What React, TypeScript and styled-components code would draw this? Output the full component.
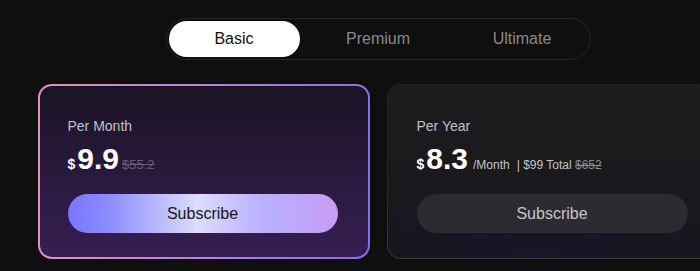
import styled, { createGlobalStyle } from "styled-components";

const GlobalStyle = createGlobalStyle`
  html, body {
    margin: 0;
    padding: 0;
    background: #0f0f0f;
  }

  body {
    font-family: "Liberation Sans", Arial, sans-serif;
    overflow: hidden;
  }
`;

const tabs = ["Basic", "Premium", "Ultimate"];

export default function App() {
  return (
    <>
      <GlobalStyle />
      <Page>
        <TabBar>
          {tabs.map((tab, i) => (
            <Tab key={tab} $active={i === 0}>
              {tab}
            </Tab>
          ))}
        </TabBar>
        <CardRow>
          <Card $featured>
            <Period>Per Month</Period>
            <PriceRow>
              <Currency>$</Currency>
              <Amount>9.9</Amount>
              <OldPrice $featured>$55.2</OldPrice>
            </PriceRow>
            <SubscribeButton $featured>Subscribe</SubscribeButton>
          </Card>
          <Card>
            <Period>Per Year</Period>
            <PriceRow>
              <Currency>$</Currency>
              <Amount>8.3</Amount>
              <Unit>/Month</Unit>
              <Total>
                | $99 Total <Strike>$652</Strike>
              </Total>
            </PriceRow>
            <SubscribeButton>Subscribe</SubscribeButton>
          </Card>
        </CardRow>
      </Page>
    </>
  );
}

const Page = styled.div`
  width: 756px;
  display: flex;
  flex-direction: column;
  align-items: center;
  padding-top: 18px;
  gap: 24px;
`;

const TabBar = styled.div`
  display: flex;
  gap: 13px;
  padding: 2px;
  border: 1px solid #262628;
  border-radius: 999px;
  background: #0f0f0f;
`;

const Tab = styled.div<{ $active?: boolean }>`
  width: 131px;
  height: 36px;
  display: flex;
  align-items: center;
  justify-content: center;
  border-radius: 999px;
  font-size: 16px;
  color: ${(p) => (p.$active ? "#111111" : "#8a8a8c")};
  background: ${(p) => (p.$active ? "#ffffff" : "transparent")};
`;

const CardRow = styled.div`
  display: flex;
  gap: 17px;
`;

const Card = styled.div<{ $featured?: boolean }>`
  width: 332px;
  box-sizing: border-box;
  display: flex;
  flex-direction: column;
  border-radius: 14px;
  border: ${(p) => (p.$featured ? "2px" : "1px")} solid transparent;
  padding: ${(p) => (p.$featured ? "32px 30px 24px 28px" : "33px 30px 25px 29px")};
  background: ${(p) =>
    p.$featured
      ? `linear-gradient(180deg, #1a1424 0%, #2a1a3f 55%, #361e52 100%) padding-box,
         linear-gradient(90deg, #e48ec9 0%, #b57ee0 55%, #8a6cf2 100%) border-box`
      : `radial-gradient(ellipse 60% 50% at 45% 100%, #1a1428 0%, rgba(26, 20, 40, 0) 100%) padding-box,
         linear-gradient(180deg, #1d1d1f 0%, #17161b 100%) padding-box,
         linear-gradient(180deg, #232325 0%, #2a2a2c 60%, #3a3a3c 100%) border-box`};
`;

const Period = styled.div`
  font-size: 14px;
  line-height: 16px;
  color: #c2c0c8;
`;

const PriceRow = styled.div`
  display: flex;
  align-items: baseline;
  margin-top: 8px;
  height: 34px;
  color: #ffffff;
`;

const Currency = styled.span`
  font-size: 14px;
  font-weight: 700;
  margin-right: 2px;
`;

const Amount = styled.span`
  font-size: 30px;
  line-height: 34px;
  font-weight: 700;
`;

const OldPrice = styled.span<{ $featured?: boolean }>`
  margin-left: 3px;
  font-size: 13px;
  color: ${(p) => (p.$featured ? "#6c6078" : "#8a8a8c")};
  text-decoration: line-through;
`;

const Unit = styled.span`
  margin-left: 5px;
  font-size: 12px;
  color: #c4c4c8;
`;

const Total = styled.span`
  margin-left: 7px;
  font-size: 12px;
  color: #c4c4c8;
`;

const Strike = styled.span`
  color: #8e8e92;
  text-decoration: line-through;
`;

const SubscribeButton = styled.button<{ $featured?: boolean }>`
  margin-top: 18px;
  height: 39px;
  width: 100%;
  border: none;
  border-radius: 999px;
  font-family: inherit;
  font-size: 16px;
  color: ${(p) => (p.$featured ? "#161420" : "#c6c6ca")};
  background: ${(p) =>
    p.$featured
      ? "linear-gradient(90deg, #7876ff 0%, #8a8aff 14%, #dcdcff 48%, #b9b0ff 72%, #c79cf5 100%)"
      : "#2c2b31"};
`;
